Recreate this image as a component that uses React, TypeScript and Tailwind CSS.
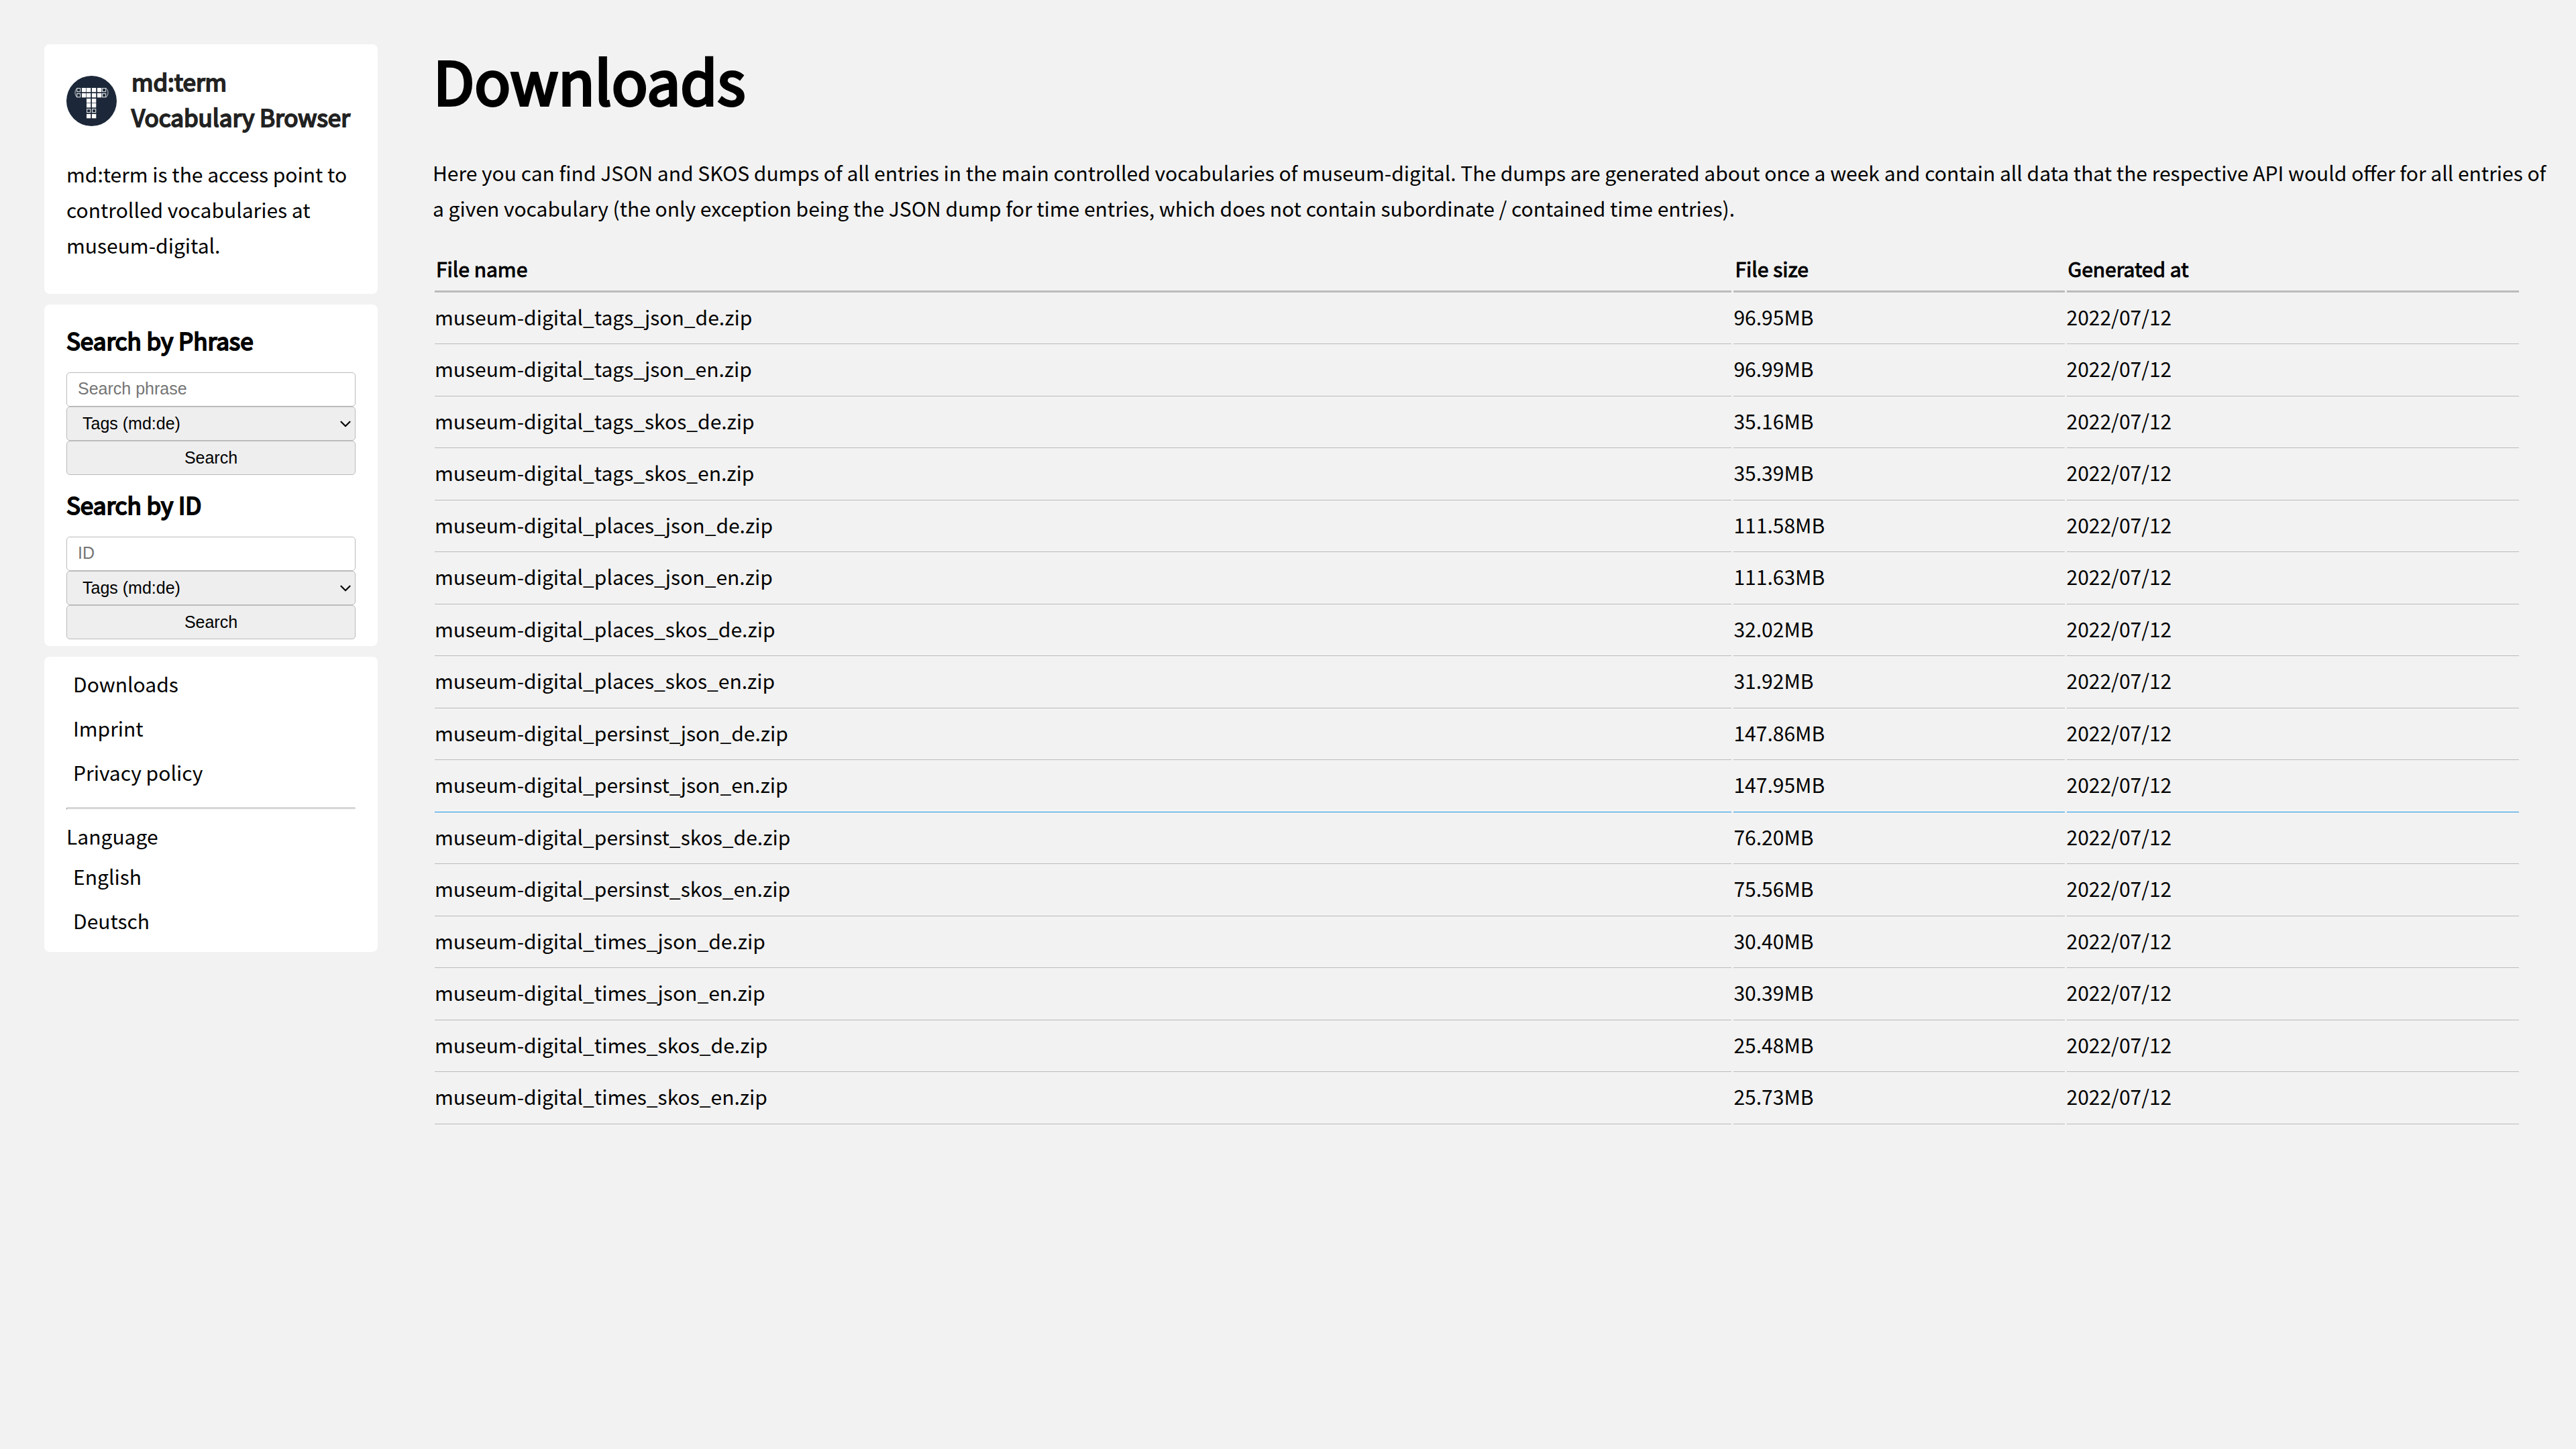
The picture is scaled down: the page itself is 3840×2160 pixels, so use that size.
import { ChevronDown } from "lucide-react";

const GENERATED = "2022/07/12";

const FILES: { name: string; size: string; active?: boolean }[] = [
  { name: "museum-digital_tags_json_de.zip", size: "96.95MB" },
  { name: "museum-digital_tags_json_en.zip", size: "96.99MB" },
  { name: "museum-digital_tags_skos_de.zip", size: "35.16MB" },
  { name: "museum-digital_tags_skos_en.zip", size: "35.39MB" },
  { name: "museum-digital_places_json_de.zip", size: "111.58MB" },
  { name: "museum-digital_places_json_en.zip", size: "111.63MB" },
  { name: "museum-digital_places_skos_de.zip", size: "32.02MB" },
  { name: "museum-digital_places_skos_en.zip", size: "31.92MB" },
  { name: "museum-digital_persinst_json_de.zip", size: "147.86MB" },
  { name: "museum-digital_persinst_json_en.zip", size: "147.95MB", active: true },
  { name: "museum-digital_persinst_skos_de.zip", size: "76.20MB" },
  { name: "museum-digital_persinst_skos_en.zip", size: "75.56MB" },
  { name: "museum-digital_times_json_de.zip", size: "30.40MB" },
  { name: "museum-digital_times_json_en.zip", size: "30.39MB" },
  { name: "museum-digital_times_skos_de.zip", size: "25.48MB" },
  { name: "museum-digital_times_skos_en.zip", size: "25.73MB" },
];

const COLS = [15, 23, 30, 38, 46, 53];
const ROWS = [18, 26, 34, 41, 49, 57];
const SOLID = [
  [1, 0], [2, 0], [3, 0], [4, 0],
  [1, 1], [2, 1], [3, 1], [4, 1],
  [2, 2], [3, 2], [2, 3], [3, 3], [2, 5], [3, 5],
];
const HOLLOW = [[0, 0], [5, 0], [0, 1], [5, 1], [2, 4], [3, 4]];

function Logo() {
  return (
    <svg viewBox="0 0 75 75" className="mb-3 size-[75px] shrink-0" aria-hidden="true">
      <circle cx="37.5" cy="37.5" r="37.5" fill="#1c2839" />
      {SOLID.map(([c, r]) => (
        <rect key={`s${c}-${r}`} x={COLS[c]} y={ROWS[r]} width="6.3" height="6.3" fill="#fff" />
      ))}
      {HOLLOW.map(([c, r]) => (
        <rect
          key={`h${c}-${r}`}
          x={COLS[c] + 0.6}
          y={ROWS[r] + 0.6}
          width="5.1"
          height="5.1"
          fill="none"
          stroke="#d5d8dc"
          strokeWidth="1.2"
        />
      ))}
      <path d="M16 18.5C12 21 12 29.5 16 32M59 18.5C63 21 63 29.5 59 32" fill="none" stroke="#c9cdd2" strokeWidth="1" />
    </svg>
  );
}

const control =
  "block h-[51px] w-full rounded-[5px] border border-[#bbb] pb-0.5 font-['Liberation_Sans',Arial,sans-serif] text-[25px] leading-[30px]";

function SearchForm({ title, placeholder }: { title: string; placeholder: string }) {
  return (
    <form className="flex flex-col gap-[22px]">
      <h3 className="text-[35px] leading-[53px] [-webkit-text-stroke:2px_#000]">{title}</h3>
      <div>
        <input
          type="text"
          aria-label={placeholder}
          placeholder={placeholder}
          className={`${control} bg-white px-4 text-black placeholder:text-[#757575]`}
        />
        <div className="relative">
          <select aria-label={`${title}: vocabulary`} className={`${control} appearance-none bg-[#eee] pr-12 pl-[23px] text-black`}>
            <option>Tags (md:de)</option>
          </select>
          <ChevronDown
            className="pointer-events-none absolute top-[13px] right-[2px] size-[26px] text-black"
            strokeWidth={2}
            aria-hidden="true"
          />
        </div>
        <button type="submit" className={`${control} bg-[#eee] text-center text-black`}>
          Search
        </button>
      </div>
    </form>
  );
}

function NavLink({ children }: { children: string }) {
  return (
    <li>
      <a href="#" className="block px-[10px] leading-[66px]">
        {children}
      </a>
    </li>
  );
}

const card = "rounded-lg bg-white px-[33px]";
const th = "border-b-[3px] border-[#bbb] px-[2px] pt-[3px] pb-[6px] text-left font-normal [-webkit-text-stroke:1px_#000]";

export default function App() {
  return (
    <div className="flex min-h-screen items-start bg-[#f2f2f2] pr-[82px] pl-[66px] font-['Noto_Sans_CJK_SC',sans-serif] text-[30px] leading-[53px] text-black">
      <aside className="mt-[66px] flex w-[497px] shrink-0 flex-col gap-[16px]">
        <section className={`${card} pt-[28px] pb-[46px]`}>
          <a href="#" className="flex items-end gap-[22px] text-[#222]">
            <Logo />
            <h2 className="text-[35px] leading-[53px] whitespace-nowrap [-webkit-text-stroke:2px_#222]">
              md:term
              <br />
              Vocabulary Browser
            </h2>
          </a>
          <p className="mt-[33px]">md:term is the access point to controlled vocabularies at museum-digital.</p>
        </section>

        <section className={`${card} flex flex-col gap-[17px] pt-[26px] pb-[10px]`}>
          <SearchForm title="Search by Phrase" placeholder="Search phrase" />
          <SearchForm title="Search by ID" placeholder="ID" />
        </section>

        <nav className={`${card} pt-[7px] pb-[14px]`}>
          <ul>
            <NavLink>Downloads</NavLink>
            <NavLink>Imprint</NavLink>
            <NavLink>Privacy policy</NavLink>
          </ul>
          <hr className="mt-[20px] mb-[13px] h-[3px] border border-t-[#9a9a9a] border-r-[#eee] border-b-[#eee] border-l-[#9a9a9a]" />
          <p>Language</p>
          <ul>
            <NavLink>English</NavLink>
            <NavLink>Deutsch</NavLink>
          </ul>
        </nav>
      </aside>

      <main className="ml-[82px] min-w-0 grow pt-[59px]">
        <h1 className="pl-px text-[89px] leading-[120px] [-webkit-text-stroke:4px_#000]">Downloads</h1>
        <p className="mt-[52px] -mr-[50px]">
          Here you can find JSON and SKOS dumps of all entries in the main controlled vocabularies of museum-digital. The
          dumps are generated about once a week and contain all data that the respective API would offer for all entries of
          a given vocabulary (the only exception being the JSON dump for time entries, which does not contain subordinate /
          contained time entries).
        </p>
        <table className="mt-[31px] w-full table-fixed border-separate border-spacing-[3px]">
          <colgroup>
            <col className="w-[62.35%]" />
            <col className="w-[15.9%]" />
            <col />
          </colgroup>
          <thead>
            <tr>
              <th className={th}>File name</th>
              <th className={th}>File size</th>
              <th className={th}>Generated at</th>
            </tr>
          </thead>
          <tbody>
            {FILES.map((f) => (
              <tr
                key={f.name}
                className={`${f.active ? "[&>td]:border-[#1a94e6]" : "[&>td]:border-[#bbb]"} [&>td]:border-b [&>td]:pt-[7px] [&>td]:pb-[13px] even:[&>td]:pb-[14px]`}
              >
                <td>
                  <a href="#">{f.name}</a>
                </td>
                <td>{f.size}</td>
                <td>{GENERATED}</td>
              </tr>
            ))}
          </tbody>
        </table>
      </main>
    </div>
  );
}
